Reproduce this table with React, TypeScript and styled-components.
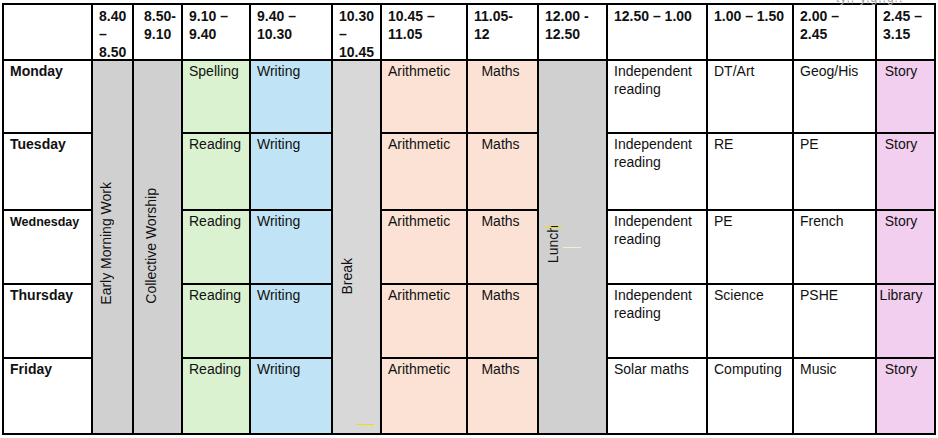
import React from 'react';
import styled, { createGlobalStyle } from 'styled-components';

const GlobalStyle = createGlobalStyle`
  html, body {
    margin: 0;
    padding: 0;
    background: #fff;
  }
  body {
    font-family: "Liberation Sans", Arial, sans-serif;
    color: #111;
  }
`;

const COLORS = {
  grey: '#d0d0d0',
  break: '#d8d8d8',
  green: '#daf2d0',
  blue: '#c0e4f5',
  peach: '#fbe2d5',
  pink: '#f2ceef',
  white: '#fff',
};

const COL_WIDTHS = [89, 41, 49, 68, 82, 49, 86, 71, 69, 100, 86, 83, 59];

const Page = styled.div`
  position: relative;
  padding: 3px 0 0 2px;
  width: 938px;
  height: 438px;
  box-sizing: border-box;
  overflow: hidden;
`;

const Faint = styled.span`
  position: absolute;
  top: -9px;
  left: 836px;
  font-size: 12px;
  color: #a0a0a0;
  letter-spacing: 1px;
  white-space: nowrap;
`;

const Table = styled.table`
  border-collapse: collapse;
  table-layout: fixed;
  width: 932px;
  font-size: 14px;
  line-height: 18px;
`;

const HeadRow = styled.tr`
  height: 56px;
`;

const BodyRow = styled.tr<{ $h: number }>`
  height: ${p => p.$h}px;
`;

const HeadCell = styled.th<{ $pad?: number }>`
  border: 2px solid #000;
  padding: 2px 2px 0 ${p => p.$pad ?? 6}px;
  vertical-align: top;
  text-align: left;
  font-weight: 700;
`;

const HeadText = styled.div`
  height: 46px;
  overflow: visible;
`;

const DayCell = styled.th<{ $small?: boolean }>`
  border: 2px solid #000;
  padding: ${p => (p.$small ? '2px' : '1px')} 2px 0 6px;
  vertical-align: top;
  text-align: left;
  font-weight: 700;
  font-size: ${p => (p.$small ? '12.5px' : '14px')};
`;

const Cell = styled.td<{ $bg?: string; $center?: boolean; $pl?: number; $pr?: number }>`
  position: relative;
  border: 2px solid #000;
  padding: 1px ${p => p.$pr ?? 3}px 0 ${p => p.$pl ?? 6}px;
  vertical-align: top;
  text-align: ${p => (p.$center ? 'center' : 'left')};
  background: ${p => p.$bg ?? COLORS.white};
`;

const VerticalCell = styled.td<{ $bg: string; $left: number; $bottom: number }>`
  position: relative;
  border: 2px solid #000;
  padding: 0 0 ${p => p.$bottom}px ${p => p.$left}px;
  vertical-align: bottom;
  background: ${p => p.$bg};
`;

const VerticalLabel = styled.span`
  display: inline-block;
  writing-mode: vertical-rl;
  transform: rotate(180deg);
  white-space: nowrap;
`;

const Mark = styled.span<{ $x: number; $y: number; $w: number; $c: string }>`
  position: absolute;
  left: ${p => p.$x}px;
  top: ${p => p.$y}px;
  width: ${p => p.$w}px;
  height: 1px;
  background: ${p => p.$c};
`;

type Day = {
  name: string;
  h: number;
  small?: boolean;
  early: string;
  indep: string;
  mid: string;
  late: string;
  story: string;
};

const DAYS: Day[] = [
  { name: 'Monday', h: 73, early: 'Spelling', indep: 'Independent reading', mid: 'DT/Art', late: 'Geog/His', story: 'Story' },
  { name: 'Tuesday', h: 77, early: 'Reading', indep: 'Independent reading', mid: 'RE', late: 'PE', story: 'Story' },
  { name: 'Wednesday', h: 74, small: true, early: 'Reading', indep: 'Independent reading', mid: 'PE', late: 'French', story: 'Story' },
  { name: 'Thursday', h: 74, early: 'Reading', indep: 'Independent reading', mid: 'Science', late: 'PSHE', story: 'Library' },
  { name: 'Friday', h: 76, early: 'Reading', indep: 'Solar maths', mid: 'Computing', late: 'Music', story: 'Story' },
];

const HEADERS: { lines: string[]; pad?: number }[] = [
  { lines: [''] },
  { lines: ['8.40', '–', '8.50'] },
  { lines: ['8.50-', '9.10'], pad: 10 },
  { lines: ['9.10 –', '9.40'] },
  { lines: ['9.40 –', '10.30'] },
  { lines: ['10.30', '–', '10.45'] },
  { lines: ['10.45 –', '11.05'] },
  { lines: ['11.05-', '12'] },
  { lines: ['12.00 -', '12.50'] },
  { lines: ['12.50 – 1.00'] },
  { lines: ['1.00 – 1.50'] },
  { lines: ['2.00 –', '2.45'] },
  { lines: ['2.45 –', '3.15'] },
];

export default function App() {
  return (
    <Page>
      <GlobalStyle />
      <Faint>ty,,·y,g,,g.,</Faint>
      <Table>
        <colgroup>
          {COL_WIDTHS.map((w, i) => (
            <col key={i} style={{ width: w }} />
          ))}
        </colgroup>
        <thead>
          <HeadRow>
            {HEADERS.map((h, i) => (
              <HeadCell key={i} $pad={h.pad}>
                <HeadText>
                  {h.lines.map((l, j) => (
                    <React.Fragment key={j}>
                      {j > 0 && <br />}
                      {l}
                    </React.Fragment>
                  ))}
                </HeadText>
              </HeadCell>
            ))}
          </HeadRow>
        </thead>
        <tbody>
          {DAYS.map((d, i) => (
            <BodyRow key={d.name} $h={d.h}>
              <DayCell $small={d.small}>{d.name}</DayCell>
              {i === 0 && (
                <>
                  <VerticalCell rowSpan={5} $bg={COLORS.grey} $left={4} $bottom={124}>
                    <VerticalLabel>Early Morning Work</VerticalLabel>
                  </VerticalCell>
                  <VerticalCell rowSpan={5} $bg={COLORS.grey} $left={8} $bottom={125}>
                    <VerticalLabel>Collective Worship</VerticalLabel>
                  </VerticalCell>
                </>
              )}
              <Cell $bg={COLORS.green}>{d.early}</Cell>
              <Cell $bg={COLORS.blue}>Writing</Cell>
              {i === 0 && (
                <VerticalCell rowSpan={5} $bg={COLORS.break} $left={5} $bottom={134}>
                  <VerticalLabel>Break</VerticalLabel>
                  <Mark $x={24} $y={363} $w={17} $c="#f0e000" />
                </VerticalCell>
              )}
              <Cell $bg={COLORS.peach}>Arithmetic</Cell>
              <Cell $bg={COLORS.peach} $center $pl={3} $pr={7}>
                Maths
              </Cell>
              {i === 0 && (
                <VerticalCell rowSpan={5} $bg={COLORS.grey} $left={5} $bottom={166}>
                  <VerticalLabel>Lunch</VerticalLabel>
                  <Mark $x={6} $y={166} $w={17} $c="#f0e000" />
                  <Mark $x={24} $y={186} $w={18} $c="#f4f0c8" />
                </VerticalCell>
              )}
              <Cell>{d.indep}</Cell>
              <Cell>{d.mid}</Cell>
              <Cell>{d.late}</Cell>
              <Cell $bg={COLORS.pink} $center $pl={2} $pr={11}>
                {d.story}
              </Cell>
            </BodyRow>
          ))}
        </tbody>
      </Table>
    </Page>
  );
}
